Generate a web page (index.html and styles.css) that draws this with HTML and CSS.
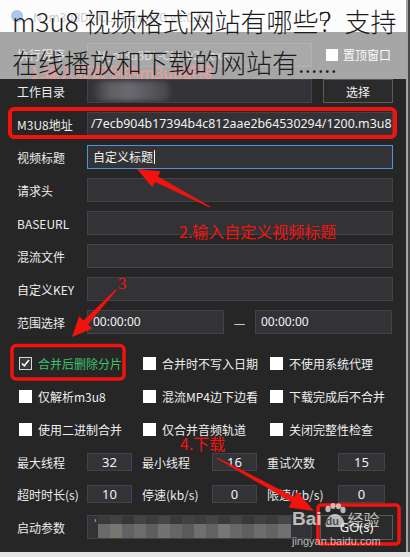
FILE: index.html
```html
<!DOCTYPE html>
<html lang="zh-CN">
<head>
    <meta charset="UTF-8">
    <meta name="viewport" content="width=device-width, initial-scale=1.0">
    <title>m3u8 视频格式网站有哪些？</title>
    <link rel="stylesheet" href="styles.css">
</head>
<body>
    <div class="window">
        <div class="top">
            <div class="titlebar">
                <span class="app-icon"></span>
                <span class="app-title">N_m3u8DL-CLI-SimpleG v2.0.0.6</span>
                <span class="max-btn"></span>
            </div>
            <div class="exec-row">
                <span class="label">执行程序</span>
                <div class="exec-field">N_m3u8DL-CLI_v2...exe</div>
                <div class="top-check"><span class="top-box"></span>置顶窗口</div>
            </div>
            <div class="note note-1">1.输入获取到的m3u8链接</div>
            <h1 class="headline">m3u8 视频格式网站有哪些？支持<br>在线播放和下载的网站有......</h1>
        </div>

        <div class="form">
            <div class="row">
                <span class="label">工作目录</span>
                <div class="field short"><span class="blur"></span></div>
                <div class="btn">选择</div>
            </div>
            <div class="row">
                <span class="label">M3U8地址</span>
                <div class="field url">/7ecb904b17394b4c812aae2b64530294/1200.m3u8</div>
            </div>
            <div class="row">
                <span class="label">视频标题</span>
                <div class="field focus">自定义标题<span class="caret"></span></div>
            </div>
            <div class="row">
                <span class="label">请求头</span>
                <div class="field"></div>
            </div>
            <div class="row">
                <span class="label">BASEURL</span>
                <div class="field"></div>
            </div>
            <div class="row">
                <span class="label">混流文件</span>
                <div class="field"></div>
            </div>
            <div class="row">
                <span class="label">自定义KEY</span>
                <div class="field"></div>
            </div>
            <div class="row">
                <span class="label">范围选择</span>
                <div class="field time">00:00:00</div>
                <span class="dash">—</span>
                <div class="field time">00:00:00</div>
            </div>
        </div>

        <div class="checks">
            <div class="check on"><span class="box"><svg width="9" height="8" viewBox="0 0 9 8"><path d="M1 4.5 L3.3 6.8 L8 1" fill="none" stroke="#fff" stroke-width="1.6"/></svg></span>合并后删除分片</div>
            <div class="check"><span class="box"></span>合并时不写入日期</div>
            <div class="check"><span class="box"></span>不使用系统代理</div>
            <div class="check"><span class="box"></span>仅解析m3u8</div>
            <div class="check"><span class="box"></span>混流MP4边下边看</div>
            <div class="check"><span class="box"></span>下载完成后不合并</div>
            <div class="check"><span class="box"></span>使用二进制合并</div>
            <div class="check"><span class="box"></span>仅合并音频轨道</div>
            <div class="check"><span class="box"></span>关闭完整性检查</div>
        </div>

        <div class="nums">
            <div class="num-group"><span class="label">最大线程</span><div class="num">32</div></div>
            <div class="num-group"><span class="label">最小线程</span><div class="num">16</div></div>
            <div class="num-group"><span class="label">重试次数</span><div class="num wide">15</div></div>
        </div>
        <div class="nums second">
            <div class="num-group"><span class="label">超时时长(s)</span><div class="num">10</div></div>
            <div class="num-group"><span class="label">停速(kb/s)</span><div class="num">0</div></div>
            <div class="num-group"><span class="label">限速(kb/s)</span><div class="num wide">0</div></div>
        </div>

        <div class="row launch">
            <span class="label">启动参数</span>
            <div class="field short mosaic"><span class="tick">'</span></div>
            <div class="go">GO(s)</div>
        </div>

        <!-- пометки поверх скриншота -->
        <div class="note note-2">2.输入自定义视频标题</div>
        <div class="note note-3">3</div>
        <div class="note note-4">4.下载</div>

        <svg class="marks" width="406" height="552" viewBox="0 0 406 552">
            <rect x="10" y="109" width="385" height="28" rx="4" fill="none" stroke="#f2130f" stroke-width="4"/>
            <rect x="12" y="345.5" width="112" height="33.5" rx="4" fill="none" stroke="#f2130f" stroke-width="3.5"/>
            <rect x="318" y="505" width="81" height="39" rx="3" fill="none" stroke="#f2130f" stroke-width="3.5"/>
            <polygon points="210.3,206.4 157.9,176.5 160.7,171.2 137,169 152.3,187.2 155.1,181.9 209.7,207.6" fill="#f2130f"/>
            <polygon points="115.5,289.5 83.5,320.4 79.1,316.3 72,337 92.3,328.5 87.9,324.4 116.5,290.5" fill="#f2130f"/>
            <polygon points="216.7,458.6 291.5,502.1 288.6,507.4 314,511 297.2,491.6 294.3,496.9 217.3,457.4" fill="#f2130f"/>
        </svg>

        <div class="watermark">
            <div class="wm-logo">
                <span class="wm-bai">Bai</span>
                <span class="wm-paw">
                    <svg width="24" height="26" viewBox="0 0 24 26">
                        <ellipse cx="5" cy="6" rx="2.6" ry="3.2"/>
                        <ellipse cx="10" cy="3" rx="2.6" ry="3"/>
                        <ellipse cx="15.5" cy="3.2" rx="2.6" ry="3"/>
                        <ellipse cx="20" cy="7" rx="2.6" ry="3.2"/>
                        <path d="M3 24 C1 18 6 11 12 11 C18 11 23 18 21 24 Z"/>
                    </svg>
                    <span class="wm-du">du</span>
                </span>
                <span class="wm-jy">经验</span>
            </div>
            <div class="wm-url">jingyan.baidu.com</div>
        </div>
    </div>
</body>
</html>
```

FILE: styles.css
```css
body {
    margin: 0;
    background-color: #e4e4e4;
    font-family: "Noto Sans CJK SC", "Noto Sans", sans-serif;
}
.window {
    position: relative;
    width: 406px;
    height: 552px;
    background-color: #262626;
    border-right: 2px solid #a3a3a3;
    box-shadow: 2px 0 0 #474747;
    overflow: hidden;
}
.top {
    position: relative;
    height: 79px;
    overflow: hidden;
}
.titlebar {
    height: 32px;
    background-color: #fcfcfc;
    display: flex;
    align-items: center;
    padding-left: 11px;
}
.app-icon {
    width: 12px;
    height: 12px;
    border-radius: 50%;
    background-color: #a9c8ea;
}
.app-title {
    margin-left: 10px;
    font-size: 12px;
    color: #c9cfd9;
}
.max-btn {
    margin-left: 107px;
    width: 7px;
    height: 7px;
    border: 1px solid #6a6a6a;
}
.exec-row {
    height: 47px;
    background-color: #a6a6a6;
    display: flex;
    align-items: center;
    padding-left: 17px;
    box-sizing: border-box;
    padding-bottom: 2px;
}
.exec-row .label {
    color: #e9e9e9;
}
.exec-field {
    width: 225px;
    height: 24px;
    box-sizing: border-box;
    border: 1px solid #b2b2b2;
    background-color: #a9a9a9;
    color: #dedede;
    font-size: 12px;
    line-height: 22px;
    padding-left: 9px;
}
.top-check {
    display: flex;
    align-items: center;
    margin-left: 14px;
    font-size: 12px;
    color: #fafafa;
}
.top-box {
    width: 12px;
    height: 12px;
    background-color: #fff;
    margin-right: 5px;
}
.headline {
    position: absolute;
    left: 12px;
    top: 0;
    margin: 0;
    font-size: 26px;
    font-weight: 300;
    line-height: 41px;
    color: #1b1b1b;
    white-space: nowrap;
}
.note {
    position: absolute;
    color: #f2130f;
    font-size: 16px;
    line-height: 16px;
    white-space: nowrap;
}
.note-1 {
    left: 30px;
    top: 64px;
    color: #f49a9a;
}
.note-2 {
    left: 179px;
    top: 223px;
}
.note-3 {
    left: 118px;
    top: 276px;
    font-family: "Liberation Serif", serif;
    font-size: 17px;
}
.note-4 {
    left: 180px;
    top: 435px;
}
.label {
    width: 70px;
    flex: none;
    font-size: 12px;
    color: #ececec;
    white-space: nowrap;
}
.form {
    display: flex;
    flex-direction: column;
    gap: 9px;
}
.row {
    display: flex;
    align-items: center;
    height: 24px;
    padding: 0 13px 0 17px;
}
.field {
    flex: 1;
    height: 24px;
    box-sizing: border-box;
    background-color: #333337;
    border: 1px solid #434346;
    color: #f2f2f2;
    font-size: 12px;
    line-height: 22px;
    padding-left: 5px;
    position: relative;
    overflow: hidden;
    white-space: nowrap;
}
.field.short {
    flex: none;
    width: 225px;
}
.field.url {
    font-family: "Noto Sans", sans-serif;
    font-size: 12.4px;
    padding-left: 3px;
}
.field.focus {
    border-color: #4a94dc;
    font-size: 12px;
}
.caret {
    display: inline-block;
    width: 1px;
    height: 14px;
    background-color: #fff;
    vertical-align: -2px;
    margin-left: 1px;
}
.field.time {
    flex: none;
    width: 137px;
    font-family: "Noto Sans", sans-serif;
}
.dash {
    width: 31px;
    text-align: center;
    color: #eee;
    font-size: 13px;
}
.blur {
    position: absolute;
    left: 6px;
    top: 1px;
    width: 76px;
    height: 20px;
    border-radius: 8px;
    background: linear-gradient(90deg, #3b3b3f 0%, #5e5e63 20%, #6a6b70 45%, #5a5a60 70%, #46464a 100%);
    filter: blur(2.5px);
}
.btn {
    width: 70px;
    height: 24px;
    margin-left: 11px;
    box-sizing: border-box;
    border: 1px solid #5a5a5a;
    background-color: #2b2b2b;
    color: #f2f2f2;
    font-size: 12px;
    display: flex;
    justify-content: center;
    align-items: center;
}
.checks {
    display: grid;
    grid-template-columns: 124px 127px auto;
    row-gap: 13px;
    padding-left: 19px;
    margin-top: 19px;
}
.check {
    display: flex;
    align-items: center;
    height: 20px;
    font-size: 12px;
    color: #efefef;
    white-space: nowrap;
}
.box {
    width: 13px;
    height: 13px;
    box-sizing: border-box;
    background-color: #fff;
    margin-right: 6px;
    display: flex;
    justify-content: center;
    align-items: center;
}
.check.on {
    color: #3dc46c;
}
.check.on .box {
    background-color: #3a3a3a;
    border: 1px solid #d8d8d8;
}
.nums {
    display: flex;
    padding-left: 17px;
    height: 18px;
    margin-top: 14px;
}
.nums.second {
    margin-top: 14px;
}
.num-group {
    width: 125px;
    display: flex;
    align-items: center;
}
.num {
    width: 45px;
    height: 18px;
    box-sizing: border-box;
    background-color: #333337;
    border: 1px solid #434346;
    color: #f2f2f2;
    font-family: "Noto Sans", sans-serif;
    font-size: 13px;
    line-height: 16px;
    text-align: center;
}
.num.wide {
    width: 47px;
    margin-left: 1px;
}
.launch {
    margin-top: 12px;
}
.mosaic {
    background:
        linear-gradient(90deg, #6a6a6a 0 12px, #76776f 12px 24px, #626266 24px 36px, #6c6c6c 36px 48px, #5e5e60 48px 60px, #72726e 60px 72px, #666 72px 84px, #5a5a5e 84px 96px, #6f6f6f 96px 108px, #62625f 108px 120px, #767676 120px 132px, #686864 132px 144px, #5f5f63 144px 156px, #6d6d6d 156px 168px, #636363 168px 180px, #707070 180px 193px) 10px 8px / 193px 14px no-repeat,
        linear-gradient(90deg, #3a3a3c 0 12px, #414141 12px 24px, #363638 24px 36px, #444 36px 48px, #3c3c3e 48px 60px, #464646 60px 72px, #39393b 72px 84px, #424242 84px 96px, #3d3d3d 96px 108px, #454547 108px 120px, #3a3a3a 120px 132px, #434343 132px 144px, #38383a 144px 156px, #404040 156px 168px, #3b3b3b 168px 180px, #464646 180px 193px) 10px 0 / 193px 8px no-repeat,
        #333337;
}
.tick {
    color: #bbb;
    font-size: 10px;
    position: absolute;
    left: 6px;
    top: -3px;
}
.go {
    width: 73px;
    height: 25px;
    margin-left: 8px;
    box-sizing: border-box;
    border: 1px solid #5a5a5a;
    background-color: #2b2b2b;
    color: #f2f2f2;
    font-family: "Noto Sans", sans-serif;
    font-size: 13px;
    display: flex;
    justify-content: center;
    align-items: center;
}
.marks {
    position: absolute;
    left: 0;
    top: 0;
    pointer-events: none;
}
.watermark {
    position: absolute;
    left: 292px;
    top: 502px;
    color: rgba(235, 235, 235, 0.75);
    pointer-events: none;
}
.wm-logo {
    display: flex;
    align-items: flex-end;
    height: 27px;
}
.wm-bai {
    font-family: "Liberation Sans", sans-serif;
    font-weight: bold;
    font-size: 19px;
    line-height: 19px;
    margin-bottom: 1px;
}
.wm-paw {
    position: relative;
    width: 24px;
    height: 26px;
    margin-left: 1px;
}
.wm-paw svg {
    fill: rgba(235, 235, 235, 0.75);
}
.wm-du {
    position: absolute;
    left: 3px;
    top: 12px;
    font-family: "Liberation Sans", sans-serif;
    font-weight: bold;
    font-size: 11px;
    color: #4a4a4a;
}
.wm-jy {
    font-size: 16px;
    line-height: 18px;
    margin-left: 1px;
    margin-bottom: 1px;
}
.wm-url {
    font-family: "Liberation Sans", sans-serif;
    font-size: 11px;
    line-height: 13px;
    margin-top: 6px;
}
```
